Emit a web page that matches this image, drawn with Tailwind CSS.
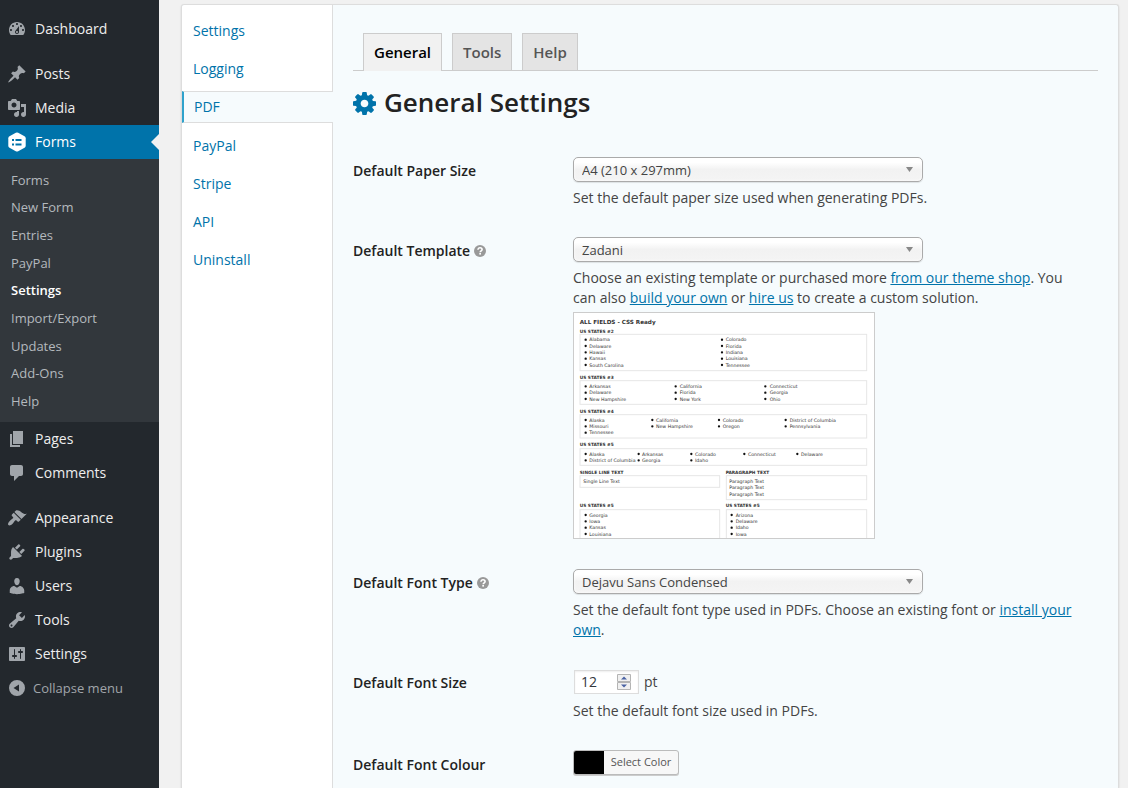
<!DOCTYPE html>
<html lang="en">
<head>
<meta charset="utf-8">
<title>PDF – General Settings</title>
<script src="https://cdn.jsdelivr.net/npm/@tailwindcss/browser@4"></script>
</head>
<body class="flex h-screen overflow-hidden bg-[#f1f1f1] font-['Open_Sans','Noto_Sans',sans-serif] text-sm text-[#444]">

<svg class="hidden" aria-hidden="true">
  <symbol id="help" viewBox="0 0 12 12"><circle cx="6" cy="6" r="6" fill="#999"/><path d="M4 4.700C4 3.400 4.900 2.800 6 2.800s2.100.600 2.100 1.700c0 1.200-1.900 1.400-1.900 2.700" fill="none" stroke="#fff" stroke-width="1.600"/><rect x="5.300" y="8" width="1.700" height="1.600" fill="#fff"/></symbol>
</svg>

<!-- Admin menu -->
<nav aria-label="Admin menu" class="w-[159px] shrink-0 bg-[#23282d] pt-3 text-[#eee]">
  <ul>
    <li><a href="#" class="flex h-[34px] items-center gap-2 pl-[7px]"><svg class="size-5 fill-[#a0a5aa]" viewBox="0 0 20 20"><path d="M3.760 16h12.480c1.100-1.370 1.760-3.110 1.760-5 0-4.420-3.580-8-8-8s-8 3.580-8 8c0 1.890.660 3.630 1.760 5zM10 4c.550 0 1 .450 1 1s-.450 1-1 1-1-.450-1-1 .450-1 1-1zM6 6c.550 0 1 .450 1 1s-.450 1-1 1-1-.450-1-1 .450-1 1-1zm8 0c.550 0 1 .450 1 1s-.450 1-1 1-1-.450-1-1 .450-1 1-1zm-5.370 5.550L12 7v6c0 1.100-.900 2-2 2s-2-.900-2-2c0-.570.240-1.080.630-1.450zM4 10c.550 0 1 .450 1 1s-.450 1-1 1-1-.450-1-1 .450-1 1-1zm12 0c.550 0 1 .450 1 1s-.450 1-1 1-1-.450-1-1 .450-1 1-1zm-5 3c0-.550-.450-1-1-1s-1 .450-1 1 .450 1 1 1 1-.450 1-1z"/></svg>Dashboard</a></li>
    <li class="mt-[11px]"><a href="#" class="flex h-[34px] items-center gap-2 pl-[7px]"><svg class="size-5 fill-[#a0a5aa]" viewBox="0 0 20 20"><path d="M10.440 3.020l1.820-1.820 6.360 6.350-1.830 1.820c-1.050-.680-2.480-.570-3.410.360l-.750.750c-.920.930-1.040 2.350-.350 3.410l-1.830 1.820-2.410-2.410-2.800 2.790c-.420.420-3.380 2.710-3.800 2.290s1.860-3.390 2.280-3.810l2.790-2.790L4.100 9.360l1.830-1.820c1.050.690 2.480.570 3.400-.360l.750-.750c.930-.920 1.050-2.350.360-3.410z"/></svg>Posts</a></li>
    <li><a href="#" class="flex h-[34px] items-center gap-2 pl-[7px]"><svg class="size-5 fill-[#a0a5aa]" viewBox="0 0 20 20"><path d="M13 11V4c0-.550-.450-1-1-1h-1.670L9 1H5L3.670 3H2c-.550 0-1 .450-1 1v7c0 .550.450 1 1 1h10c.550 0 1-.450 1-1zM7 4.500c1.380 0 2.500 1.120 2.500 2.500S8.380 9.500 7 9.500 4.500 8.380 4.500 7 5.620 4.500 7 4.500zM14 6h5v10.500c0 1.380-1.120 2.500-2.500 2.500S14 17.880 14 16.500s1.120-2.500 2.500-2.500c.170 0 .340.020.500.050V9h-3V6zm-4 8.050V13h2v3.500c0 1.380-1.120 2.500-2.500 2.500S7 17.880 7 16.500 8.120 14 9.500 14c.170 0 .340.020.500.050z"/></svg>Media</a></li>
    <li>
      <a href="#" class="relative flex h-[34px] items-center gap-2 bg-[#0073aa] pl-[7px] text-white"><svg class="size-5" viewBox="0 0 20 20"><path d="M8.800.700q1.200-.600 2.400 0l6.300 3.500q1.200.700 1.200 2v7.600q0 1.300-1.200 2l-6.300 3.500q-1.200.600-2.400 0l-6.300-3.500q-1.200-.700-1.200-2V6.200q0-1.300 1.200-2z" fill="#fff"/><path d="M5 7h2v2H5zM8.500 7h6v2h-6zM5 11.500h2v2H5zM8.500 11.500h6v2h-6z" fill="#0073aa"/></svg>Forms
        <svg class="absolute top-[9px] right-0 h-4 w-2 fill-[#f1f1f1]" viewBox="0 0 8 16"><path d="M8 0v16L0 8z"/></svg>
      </a>
      <ul class="grid h-[263px] auto-rows-fr items-center bg-[#32373c] py-[7px] pl-[11px] text-[13px] text-[#b4b9be]">
        <li><a href="#">Forms</a></li>
        <li><a href="#">New Form</a></li>
        <li><a href="#">Entries</a></li>
        <li><a href="#">PayPal</a></li>
        <li><a href="#" class="font-semibold text-white">Settings</a></li>
        <li><a href="#">Import/Export</a></li>
        <li><a href="#">Updates</a></li>
        <li><a href="#">Add-Ons</a></li>
        <li><a href="#">Help</a></li>
      </ul>
    </li>
    <li><a href="#" class="flex h-[34px] items-center gap-2 pl-[7px]"><svg class="size-5 fill-[#a0a5aa]" viewBox="0 0 20 20"><path d="M6 15V2h10v13H6zm-1 1h8v2H3V5h2v11z"/></svg>Pages</a></li>
    <li><a href="#" class="flex h-[34px] items-center gap-2 pl-[7px]"><svg class="size-5 fill-[#a0a5aa]" viewBox="0 0 20 20"><path d="M5 2h9c1.100 0 2 .900 2 2v7c0 1.100-.900 2-2 2h-2l-5 5v-5H5c-1.100 0-2-.900-2-2V4c0-1.100.900-2 2-2z"/></svg>Comments</a></li>
    <li class="mt-[11px]"><a href="#" class="flex h-[34px] items-center gap-2 pl-[7px]"><svg class="size-5 fill-[#a0a5aa]" viewBox="0 0 20 20"><path d="M14.480 11.060L7.410 3.990l1.500-1.500c.500-.560 2.300-.470 3.510.320 1.210.800 1.430 1.280 2.910 2.100 1.180.640 2.450 1.260 4.450.850zm-.710.710L6.700 4.700 4.930 6.470c-.390.390-.390 1.020 0 1.410l1.060 1.060c.390.390.390 1.030 0 1.420-.600.600-1.430 1.110-2.210 1.690-.350.260-.700.530-1.010.840C1.430 14.230.400 16.080 1.400 17.070c.990 1 2.840-.030 4.180-1.360.310-.310.580-.660.850-1.020.570-.780 1.080-1.610 1.690-2.210.390-.390 1.020-.390 1.410 0l1.060 1.060c.390.390 1.020.390 1.410 0z"/></svg>Appearance</a></li>
    <li><a href="#" class="flex h-[34px] items-center gap-2 pl-[7px]"><svg class="size-5 fill-[#a0a5aa]" viewBox="0 0 20 20"><path d="M13.110 4.360L9.870 7.600 8 5.730l3.240-3.240c.350-.340 1.050-.200 1.560.320.520.510.660 1.210.310 1.550zm-8 1.770l.910-1.120 9.010 9.010-1.190.840c-.710.710-2.630 1.160-3.820 1.160H6.140L4.900 17.260c-.590.590-1.540.590-2.120 0-.590-.580-.590-1.530 0-2.120l1.240-1.240v-3.880c0-1.130.400-3.190 1.090-3.890zm7.260 3.970l3.240-3.240c.340-.350 1.040-.210 1.550.310.520.510.660 1.210.310 1.550l-3.240 3.250z"/></svg>Plugins</a></li>
    <li><a href="#" class="flex h-[34px] items-center gap-2 pl-[7px]"><svg class="size-5 fill-[#a0a5aa]" viewBox="0 0 20 20"><path d="M10 9.250c-2.270 0-2.730-3.440-2.730-3.440C7 4.020 7.820 2 9.970 2c2.160 0 2.980 2.020 2.710 3.810 0 0-.410 3.440-2.680 3.440zm0 2.570L12.720 10c2.390 0 4.520 2.330 4.520 4.530v2.490s-3.650 1.130-7.240 1.130c-3.650 0-7.240-1.130-7.240-1.130v-2.490c0-2.250 1.940-4.480 4.470-4.480z"/></svg>Users</a></li>
    <li><a href="#" class="flex h-[34px] items-center gap-2 pl-[7px]"><svg class="size-5 fill-[#a0a5aa]" viewBox="0 0 20 20"><path d="M16.680 9.770c-1.340 1.340-3.300 1.670-4.950.990l-5.410 6.520c-.990.990-2.590.990-3.580 0s-.990-2.590 0-3.570l6.520-5.420c-.680-1.650-.350-3.610.990-4.950 1.280-1.280 3.120-1.620 4.720-1.060l-2.890 2.890 2.820 2.820 2.860-2.870c.530 1.580.180 3.390-1.080 4.650zM3.810 16.210c.400.390 1.040.390 1.430 0 .400-.400.400-1.040 0-1.430-.390-.400-1.030-.400-1.430 0-.390.390-.390 1.030 0 1.430z"/></svg>Tools</a></li>
    <li><a href="#" class="flex h-[34px] items-center gap-2 pl-[7px]"><svg class="size-5 fill-[#a0a5aa]" viewBox="0 0 20 20"><path d="M18 16V4c0-.550-.450-1-1-1H3c-.550 0-1 .450-1 1v12c0 .550.450 1 1 1h14c.550 0 1-.450 1-1zM8 11h1c.550 0 1 .450 1 1s-.450 1-1 1H8v1.500c0 .280-.220.500-.500.500s-.500-.220-.500-.500V13H6c-.550 0-1-.450-1-1s.450-1 1-1h1V5.500c0-.280.220-.500.500-.500s.500.220.500.500V11zm5-2h-1c-.550 0-1-.450-1-1s.450-1 1-1h1V5.500c0-.280.220-.500.500-.500s.500.220.500.500V7h1c.550 0 1 .450 1 1s-.450 1-1 1h-1v5.500c0 .280-.220.500-.500.500s-.500-.220-.500-.500V9z"/></svg>Settings</a></li>
    <li><button type="button" class="flex h-[34px] w-full items-center gap-1.5 pl-[7px] text-[13px] text-[#a0a5aa]"><svg class="size-5 fill-[#a0a5aa]" viewBox="0 0 20 20"><path fill-rule="evenodd" d="M10 2a8 8 0 1 1 0 16 8 8 0 0 1 0-16zm2 4.500L6.500 10l5.500 3.500z"/></svg>Collapse menu</button></li>
  </ul>
</nav>

<div class="flex min-w-0 flex-1 pt-1 pr-[9px] pl-[22px]">
  <div class="flex min-w-0 flex-1 rounded-t-[3px] border border-b-0 border-[#ddd] bg-[#f6fbfd] shadow-[0_1px_2px_#0002]">

    <nav aria-label="Form settings" class="w-[151px] shrink-0 rounded-tl-[3px] bg-white pt-[7px] text-[#0073aa] shadow-[inset_-1px_0_#ddd]">
      <ul>
        <li><a href="#" class="flex h-[38px] items-center pl-[11px]">Settings</a></li>
        <li><a href="#" class="flex h-[38px] items-center pl-[11px]">Logging</a></li>
        <li class="pt-[3px] pb-1"><a href="#" aria-current="page" class="flex h-8 items-center border-y border-l-2 border-y-[#ddd] border-l-[#2ea2cc] bg-[#f6fbfd] pl-[10px]">PDF</a></li>
        <li><a href="#" class="flex h-[38px] items-center pl-[11px]">PayPal</a></li>
        <li><a href="#" class="flex h-[38px] items-center pl-[11px]">Stripe</a></li>
        <li><a href="#" class="flex h-[38px] items-center pl-[11px]">API</a></li>
        <li><a href="#" class="flex h-[38px] items-center pl-[11px]">Uninstall</a></li>
      </ul>
    </nav>

    <main class="min-w-0 flex-1 px-5 pt-7">
      <div class="flex items-end gap-[10px] border-b border-[#ccc] pl-[10px] text-[15px] font-semibold text-[#555]">
        <a href="#" aria-current="page" class="-mb-px h-[38px] border border-b-0 border-[#ccc] bg-[#f1f1f1] px-[10px] leading-[37px] text-black">General</a>
        <a href="#" class="h-[37px] border border-b-0 border-[#ccc] bg-[#e4e4e4] px-[10px] leading-[37px]">Tools</a>
        <a href="#" class="h-[37px] border border-b-0 border-[#ccc] bg-[#e4e4e4] px-[10px] leading-[37px]">Help</a>
      </div>

      <h1 class="mt-3 flex h-10 items-center gap-2 text-[26px] font-semibold text-[#222]">
        <svg class="size-[23px] fill-[#0073aa]" viewBox="0 128 1536 1536"><path d="M1024 896q0-106-75-181t-181-75-181 75-75 181 75 181 181 75 181-75 75-181zm512-109v222q0 12-8 23t-20 13l-185 28q-19 54-39 91 35 50 107 138 10 12 10 25t-9 23q-27 37-99 108t-94 71q-12 0-26-9l-138-108q-44 23-91 38-16 136-29 186-7 28-36 28h-222q-14 0-24.500-8.500t-11.500-21.500l-28-184q-49-16-90-37l-141 107q-10 9-25 9-14 0-25-11-126-114-165-168-7-10-7-23 0-12 8-23 15-21 51-66.500t54-70.500q-27-50-41-99l-183-27q-13-2-21-12.500t-8-23.500v-222q0-12 8-23t19-13l186-28q14-46 39-92-40-57-107-138-10-12-10-24 0-10 9-23 26-36 98.500-107.500t94.500-71.500q13 0 26 10l138 107q44-23 91-38 16-136 29-186 7-28 36-28h222q14 0 24.500 8.500t11.500 21.500l28 184q49 16 90 37l142-107q9-9 24-9 13 0 25 10 129 119 165 170 7 8 7 22 0 12-8 23-15 21-51 66.500t-54 70.500q26 50 41 98l183 28q13 2 21 12.500t8 23.500z"/></svg>
        General Settings
      </h1>

      <form class="mt-[34px] grid grid-cols-[220px_minmax(0,1fr)] gap-y-[29px] pr-5 leading-5">
        <div class="font-semibold leading-7 text-[#222]"><label for="paper">Default Paper Size</label></div>
        <div>
          <div class="relative max-w-[350px]">
            <select id="paper" class="block h-[25px] w-full appearance-none rounded-[5px] border border-[#aaa] bg-linear-to-b from-white from-20% via-[#f2f2f2] via-50% to-[#f4f4f4] pl-2 text-[13px] text-[#444] shadow-[inset_0_0_3px_#fff,0_1px_1px_#0000001a]"><option>A4 (210 x 297mm)</option></select>
            <svg class="pointer-events-none absolute top-[10px] right-[10px] h-[5px] w-[7px] fill-[#888]" viewBox="0 0 7 5"><path d="M0 0h7L3.500 5z"/></svg>
          </div>
          <p class="mt-1.5">Set the default paper size used when generating PDFs.</p>
        </div>

        <div class="flex items-center gap-1 self-start font-semibold leading-7 text-[#222]"><label for="template">Default Template</label><svg class="size-3" role="img" aria-label="Help"><use href="#help"/></svg></div>
        <div>
          <div class="relative max-w-[350px]">
            <select id="template" class="block h-[25px] w-full appearance-none rounded-[5px] border border-[#aaa] bg-linear-to-b from-white from-20% via-[#f2f2f2] via-50% to-[#f4f4f4] pl-2 text-[13px] text-[#444] shadow-[inset_0_0_3px_#fff,0_1px_1px_#0000001a]"><option>Zadani</option></select>
            <svg class="pointer-events-none absolute top-[10px] right-[10px] h-[5px] w-[7px] fill-[#888]" viewBox="0 0 7 5"><path d="M0 0h7L3.500 5z"/></svg>
          </div>
          <p class="mt-1.5">Choose an existing template or purchased more <a href="#" class="text-[#0073aa] underline">from our theme shop</a>. You can also <a href="#" class="text-[#0073aa] underline">build your own</a> or <a href="#" class="text-[#0073aa] underline">hire us</a> to create a custom solution.</p>

          <!-- Template preview -->
          <svg role="img" aria-label="Template preview" class="mt-1 mb-px block w-[302px] border border-[#ccc] bg-white font-['DejaVu_Sans',sans-serif]" viewBox="0 0 900 675">
            <g fill="none" stroke="#e6e6e6" stroke-width="3">
              <rect x="18" y="64" width="860" height="109"/><rect x="18" y="203" width="860" height="71"/><rect x="18" y="305" width="860" height="70"/><rect x="18" y="407" width="860" height="50"/>
              <rect x="18" y="488" width="419" height="35"/><rect x="457" y="488" width="421" height="72"/><rect x="18" y="590" width="419" height="110"/><rect x="457" y="590" width="421" height="110"/>
            </g>
            <g fill="#333" font-weight="bold" font-size="13">
              <text x="17" y="33" font-size="17">ALL FIELDS - CSS Ready</text>
              <text x="17" y="59">US STATES #2</text><text x="17" y="197">US STATES #3</text><text x="17" y="299">US STATES #4</text><text x="17" y="400">US STATES #5</text>
              <text x="17" y="482">SINGLE LINE TEXT</text><text x="455" y="482">PARAGRAPH TEXT</text><text x="17" y="583">US STATES #5</text><text x="455" y="583">US STATES #5</text>
            </g>
            <g fill="#333" font-size="14">
              <text><tspan x="46" y="85">Alabama</tspan><tspan x="46" y="104">Delaware</tspan><tspan x="46" y="123">Hawaii</tspan><tspan x="46" y="142">Kansas</tspan><tspan x="46" y="161">South Carolina</tspan></text>
              <text><tspan x="455" y="85">Colorado</tspan><tspan x="455" y="104">Florida</tspan><tspan x="455" y="123">Indiana</tspan><tspan x="455" y="142">Louisiana</tspan><tspan x="455" y="161">Tennessee</tspan></text>
              <text><tspan x="46" y="225">Arkansas</tspan><tspan x="46" y="244">Delaware</tspan><tspan x="46" y="263">New Hampshire</tspan></text>
              <text><tspan x="317" y="225">California</tspan><tspan x="317" y="244">Florida</tspan><tspan x="317" y="263">New York</tspan></text>
              <text><tspan x="587" y="225">Connecticut</tspan><tspan x="587" y="244">Georgia</tspan><tspan x="587" y="263">Ohio</tspan></text>
              <text><tspan x="46" y="326">Alaska</tspan><tspan x="46" y="345">Missouri</tspan><tspan x="46" y="364">Tennessee</tspan></text>
              <text><tspan x="246" y="326">California</tspan><tspan x="246" y="345">New Hampshire</tspan></text>
              <text><tspan x="446" y="326">Colorado</tspan><tspan x="446" y="345">Oregon</tspan></text>
              <text><tspan x="647" y="326">District of Columbia</tspan><tspan x="647" y="345">Pennsylvania</tspan></text>
              <text><tspan x="46" y="428">Alaska</tspan><tspan x="46" y="447">District of Columbia</tspan></text>
              <text><tspan x="204" y="428">Arkansas</tspan><tspan x="204" y="447">Georgia</tspan></text>
              <text><tspan x="363" y="428">Colorado</tspan><tspan x="363" y="447">Idaho</tspan></text>
              <text x="522" y="428">Connecticut</text><text x="681" y="428">Delaware</text>
              <text x="28" y="510">Single Line Text</text>
              <text><tspan x="466" y="510">Paragraph Text</tspan><tspan x="466" y="529">Paragraph Text</tspan><tspan x="466" y="548">Paragraph Text</tspan></text>
              <text><tspan x="46" y="611">Georgia</tspan><tspan x="46" y="630">Iowa</tspan><tspan x="46" y="649">Kansas</tspan><tspan x="46" y="668">Louisiana</tspan></text>
              <text><tspan x="485" y="611">Arizona</tspan><tspan x="485" y="630">Delaware</tspan><tspan x="485" y="649">Idaho</tspan><tspan x="485" y="668">Iowa</tspan></text>
            </g>
            <path fill="none" stroke="#111" stroke-width="7" stroke-linecap="round" d="M35 80h0M35 99h0M35 118h0M35 137h0M35 156h0M444 80h0M444 99h0M444 118h0M444 137h0M444 156h0M35 220h0M35 239h0M35 258h0M305 220h0M305 239h0M305 258h0M574 220h0M574 239h0M574 258h0M35 321h0M35 340h0M35 359h0M235 321h0M235 340h0M435 321h0M435 340h0M635 321h0M635 340h0M35 423h0M35 442h0M194 423h0M194 442h0M352 423h0M352 442h0M511 423h0M670 423h0M35 606h0M35 625h0M35 644h0M35 663h0M473 606h0M473 625h0M473 644h0M473 663h0"/>
          </svg>
        </div>

        <div class="flex items-center gap-1 self-start font-semibold leading-7 text-[#222]"><label for="font">Default Font Type</label><svg class="size-3" role="img" aria-label="Help"><use href="#help"/></svg></div>
        <div>
          <div class="relative max-w-[350px]">
            <select id="font" class="block h-[25px] w-full appearance-none rounded-[5px] border border-[#aaa] bg-linear-to-b from-white from-20% via-[#f2f2f2] via-50% to-[#f4f4f4] pl-2 text-[13px] text-[#444] shadow-[inset_0_0_3px_#fff,0_1px_1px_#0000001a]"><option>Dejavu Sans Condensed</option></select>
            <svg class="pointer-events-none absolute top-[10px] right-[10px] h-[5px] w-[7px] fill-[#888]" viewBox="0 0 7 5"><path d="M0 0h7L3.500 5z"/></svg>
          </div>
          <p class="mt-1.5">Set the default font type used in PDFs. Choose an existing font or <a href="#" class="text-[#0073aa] underline">install your own</a>.</p>
        </div>

        <div class="font-semibold leading-7 text-[#222]"><label for="size">Default Font Size</label></div>
        <div class="pt-px">
          <div class="flex items-center gap-[5px] pl-px">
            <div class="relative">
              <input id="size" type="number" value="12" class="block h-6 w-[65px] border border-[#ddd] bg-white pb-px pl-[6px] text-sm text-[#32373c] shadow-[inset_0_1px_2px_#00000012] [appearance:textfield]">
              <svg class="pointer-events-none absolute top-1 right-2 h-4 w-[14px]" viewBox="0 0 14 16"><path d="M.500.500h13v7H.500zM.500 8.500h13v7H.500z" fill="#f0f0f0" stroke="#b4b4b4"/><path d="M4 5.500h6L7 2.500zM4 10.500h6l-3 3z" fill="#4a62a3"/></svg>
            </div>
            <span>pt</span>
          </div>
          <p class="mt-[7px]">Set the default font size used in PDFs.</p>
        </div>

        <div class="font-semibold leading-[30px] text-[#222]"><label for="colour">Default Font Colour</label></div>
        <div>
          <button id="colour" type="button" class="flex h-[25px] w-[106px] overflow-hidden rounded-[3px] border border-[#bbb] bg-[#f7f7f7] text-[11px] text-[#555] shadow-[0_1px_0_#ccc]"><span class="h-full w-[30px] bg-black"></span><span class="flex-1 leading-[22px]">Select Color</span></button>
        </div>
      </form>
    </main>
  </div>
</div>
</body>
</html>
